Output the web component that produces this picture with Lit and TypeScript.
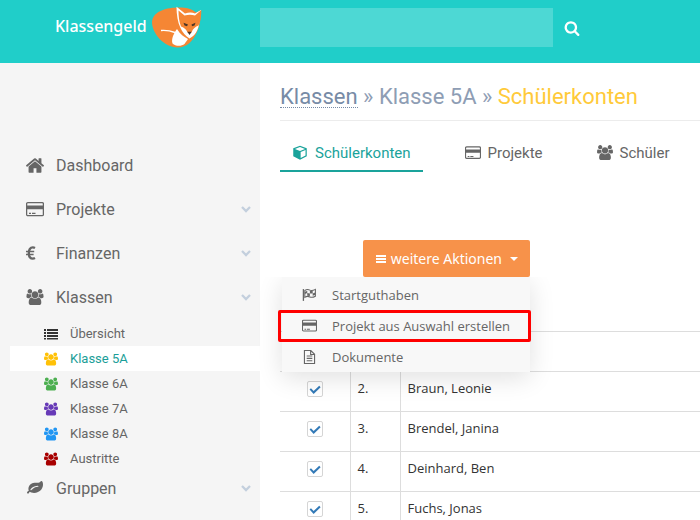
import { LitElement, html, svg, css, nothing } from "lit";
import type { TemplateResult } from "lit";
import { customElement, property, state } from "lit/decorators.js";
import { classMap } from "lit/directives/class-map.js";

interface Icon {
  box: string;
  shape: TemplateResult;
}

const icons: Record<string, Icon> = {
  home: {
    box: "90 150 1612 1400",
    shape: svg`<path d="M1472 992v480q0 26-19 45t-45 19h-384v-384H768v384H384q-26 0-45-19t-19-45V992q0-1 .5-3t.5-3l575-474 575 474q1 2 1 6zm223-69l-62 74q-8 9-21 11h-3q-13 0-21-7L896 424l-692 577q-12 8-24 7-13-2-21-11l-62-74q-8-10-7-23.5t11-21.5l719-599q32-26 76-26t76 26l244 204V288q0-14 9-23t23-9h192q14 0 23 9t9 23v408l219 182q10 8 11 21.5t-7 23.5z"/>`,
  },
  card: {
    box: "0 0 18 16",
    shape: svg`<rect x=".6" y="1.600" width="16.800" height="13" rx="1.200" fill="none" stroke="currentColor" stroke-width="1.300"/><path d="M1 4.500h16v3.700H1zM3 11.800h2v1.200H3zM6 11.800h3.500v1.200H6z"/>`,
  },
  users: {
    box: "0 0 1920 1792",
    shape: svg`<path d="M593 896q-162 5-265 128H194q-82 0-138-40.5T0 865q0-353 124-353 6 0 43.5 21t97.5 42.5T384 597q67 0 133-23-5 37-5 66 0 139 81 256zm1071 637q0 120-73 189.5t-194 69.5H523q-121 0-194-69.5T256 1533q0-53 3.5-103.5t14-109T300 1212t43-97.5 62-81 85.5-53.5T602 960q10 0 43 21.5t73 48 107 48 135 21.5 135-21.5 107-48 73-48 43-21.5q61 0 111.5 20t85.5 53.5 62 81 43 97.5 26.5 108.5 14 109 3.5 103.5zM640 256q0 106-75 181t-181 75-181-75-75-181 75-181T384 0t181 75 75 181zm704 384q0 159-112.5 271.5T960 1024 688.5 911.5 576 640t112.5-271.5T960 256t271.5 112.5T1344 640zm576 225q0 78-56 118.5t-138 40.5h-134q-103-123-265-128 81-117 81-256 0-29-5-66 66 23 133 23 59 0 119-21.5t97.5-42.5 43.5-21q124 0 124 353zm-128-609q0 106-75 181t-181 75-181-75-75-181 75-181 181-75 181 75 75 181z"/>`,
  },
  euro: {
    box: "0 0 18 16",
    shape: svg`<g fill="none" stroke="currentColor" stroke-width="2.300"><path d="M9 3Q8 2.400 6.800 2.400C4.200 2.400 2.800 4.800 2.800 8s1.400 5.600 4 5.600Q8 13.600 9 13"/><path d="M0 6.500h8.200M0 9.500h7.600" stroke-width="1.600"/></g>`,
  },
  leaf: {
    box: "0 0 1792 1792",
    shape: svg`<path d="M1280 704q0-26-19-45t-45-19q-172 0-318 49.5t-259.500 134-235.500 219.500q-19 21-19 45 0 26 19 45t45 19q24 0 45-19 27-24 74-71t67-66q137-124 268.500-176t313.500-52q26 0 45-19t19-45zm512-198q0 95-20 193-46 224-184.500 383T1230 1340q-214 108-438 108-148 0-286-47-15-5-88-42t-96-37q-16 0-39.500 32T237 1424t-52.500 70-60.500 32q-43 0-63.500-17.500T15 1449q-2-4-6-11t-5.500-10-3-9.500T0 1405q0-35 31-73.500t68-65.500 68-56 31-48q0-4-14-38t-16-44q-9-51-9-104 0-115 43.500-220t119-184.500 170.500-139 204-95.500q55-18 145-25.500t179.500-9 178.500-6 163.500-24T1475 210l29.500-29.500 29.500-28 27-20 36.500-16T1641 112q39 0 70.500 46t47.500 112 24 124 8 96z"/>`,
  },
  list: {
    box: "0 0 14 14",
    shape: svg`<path d="M0 2h2v2H0zM3 2h11v2H3zM0 5h2v2H0zM3 5h11v2H3zM0 8h2v2H0zM3 8h11v2H3zM0 11h2v1.500H0zM3 11h11v1.500H3z"/>`,
  },
  cube: {
    box: "0 0 16 16",
    shape: svg`<path fill-rule="evenodd" d="M8 .8 15.200 3.500v8.600L8 15.700.8 12.100V3.500zM8 2.100 2.600 4.200 8 6.300l5.400-2.100zM8.700 13.900l5.200-2.600V5.400L8.700 7.400z"/>`,
  },
  bars: {
    box: "0 0 12 12",
    shape: svg`<path d="M1 2h10v2H1zM1 5h10v2H1zM1 8h10v2H1z"/>`,
  },
  flag: {
    box: "0 0 16 16",
    shape: svg`<path d="M.8 2.200h1.400v12.600H.8z"/><path fill="none" stroke="currentColor" stroke-width="1.100" d="M3 3.700c2.200-1.500 3.800-1.200 5.400-.4s3.300.5 5.900-.8v7.300c-2.500 1.400-4.300 1.600-5.900.8S5 9.700 3 11z"/><path d="M3 5.200 5.600 4v2.500L3 7.500zM5.600 6.500l2.800.4v2.700l-2.800-.4zM8.400 4l3 .1v2.700l-3 .1zM11.400 6.800l2.600-1v2.600l-2.600 1z"/>`,
  },
  file: {
    box: "0 0 16 16",
    shape: svg`<path fill="none" stroke="currentColor" stroke-width="1.200" d="M2.600 1.600h6.800l4 4v9.800H2.600zM9.200 1.600v4.200h4.200M5 7.500h6M5 10h6M5 12.500h6"/>`,
  },
  search: {
    box: "0 0 1792 1792",
    shape: svg`<path d="M1216 832q0-185-131.500-316.500T768 384 451.500 515.500 320 832t131.500 316.500T768 1280t316.500-131.500T1216 832zm512 832q0 52-38 90t-90 38q-54 0-90-38l-343-342q-179 124-399 124-143 0-273.500-55.500t-225-150-150-225T64 832t55.500-273.500 150-225 225-150T768 128t273.500 55.500 225 150 150 225T1472 832q0 220-124 399l343 343q37 37 37 90z"/>`,
  },
  chevron: {
    box: "0 0 10 10",
    shape: svg`<path fill="none" stroke="currentColor" stroke-width="2.300" d="M1 3l4 4 4-4"/>`,
  },
};

@customElement("app-icon")
export class AppIcon extends LitElement {
  @property() name = "";

  static styles = css`
    :host {
      display: block;
      flex: none;
      width: 18px;
      height: 16px;
    }
    svg {
      display: block;
      width: 100%;
      height: 100%;
      fill: currentColor;
    }
  `;

  render() {
    const icon = icons[this.name];
    return icon
      ? html`<svg viewBox=${icon.box} aria-hidden="true">${icon.shape}</svg>`
      : nothing;
  }
}

const menu = [
  { label: "Dashboard", icon: "home" },
  { label: "Projekte", icon: "card", expands: true },
  { label: "Finanzen", icon: "euro", expands: true },
  {
    label: "Klassen",
    icon: "users",
    expands: true,
    children: [
      { label: "Übersicht", icon: "list", tone: "dark" },
      { label: "Klasse 5A", icon: "users", tone: "yellow", active: true },
      { label: "Klasse 6A", icon: "users", tone: "green" },
      { label: "Klasse 7A", icon: "users", tone: "purple" },
      { label: "Klasse 8A", icon: "users", tone: "blue" },
      { label: "Austritte", icon: "users", tone: "red" },
    ],
  },
  { label: "Gruppen", icon: "leaf", expands: true },
];

@customElement("side-menu")
export class SideMenu extends LitElement {
  static styles = css`
    :host {
      display: block;
      background: #f5f5f5;
      color: #666;
      padding-top: 85px;
      font-size: 16px;
    }
    ul {
      list-style: none;
      margin: 0;
      padding: 0;
    }
    a {
      display: flex;
      align-items: center;
      color: inherit;
      text-decoration: none;
    }
    .item {
      margin-bottom: 10px;
    }
    .item.open {
      margin-bottom: 0;
    }
    .entry {
      height: 34px;
      padding: 0 9px 0 26px;
      gap: 12px;
    }
    .label {
      flex: 1;
    }
    .arrow {
      width: 10px;
      height: 10px;
      color: #c3cfdd;
    }
    .sub {
      padding: 7px 0 0 10px;
      font-size: 13px;
    }
    .child {
      height: 25px;
      padding-left: 34px;
      gap: 12px;
    }
    .child app-icon {
      width: 14px;
      height: 14px;
    }
    .active {
      background: #fff;
      color: #1b9e98;
    }
    .dark { color: #333; }
    .yellow { color: #ffc107; }
    .green { color: #4caf50; }
    .purple { color: #673ab7; }
    .blue { color: #2196f3; }
    .red { color: #a80000; }
  `;

  render() {
    return html`<nav>
      <ul>
        ${menu.map(
          (m) => html`<li class=${classMap({ item: true, open: !!m.children })}>
            <a class="entry" href="#">
              <app-icon name=${m.icon}></app-icon>
              <span class="label">${m.label}</span>
              ${m.expands
                ? html`<app-icon class="arrow" name="chevron"></app-icon>`
                : nothing}
            </a>
            ${m.children
              ? html`<ul class="sub">
                  ${m.children.map(
                    (c) => html`<li>
                      <a class=${classMap({ child: true, active: !!c.active })} href="#">
                        <app-icon class=${c.tone} name=${c.icon}></app-icon>
                        <span>${c.label}</span>
                      </a>
                    </li>`
                  )}
                </ul>`
              : nothing}
          </li>`
        )}
      </ul>
    </nav>`;
  }
}

@customElement("action-menu")
export class ActionMenu extends LitElement {
  @state() private open = true;

  private actions = [
    { label: "Startguthaben", icon: "flag" },
    { label: "Projekt aus Auswahl erstellen", icon: "card", marked: true },
    { label: "Dokumente", icon: "file" },
  ];

  static styles = css`
    :host {
      display: block;
      position: relative;
      width: 250px;
      font-family: "Open Sans", "Noto Sans", sans-serif;
    }
    button {
      font: inherit;
      border: 0;
      cursor: pointer;
    }
    .toggle {
      display: flex;
      align-items: center;
      gap: 4px;
      height: 37px;
      margin-left: auto;
      padding: 0 12px;
      border-radius: 2px;
      background: #f7924a;
      color: #fff;
      font-family: "Noto Sans", sans-serif;
      font-size: 14px;
      white-space: nowrap;
    }
    .toggle app-icon {
      width: 12px;
      height: 12px;
    }
    .caret {
      margin-left: 4px;
      border: 4px solid transparent;
      border-top-color: #fff;
      border-bottom: 0;
    }
    .list {
      position: absolute;
      z-index: 2;
      top: 100%;
      right: 0;
      width: 248px;
      box-sizing: border-box;
      margin: 0;
      padding: 2px 0 0;
      list-style: none;
      background: #f8f8f8;
      box-shadow: 0 6px 24px rgba(0, 0, 0, 0.12);
      clip-path: inset(0 -40px -40px -40px);
    }
    .action {
      position: relative;
      display: flex;
      align-items: center;
      gap: 15px;
      width: 100%;
      height: 31px;
      padding: 0 20px;
      background: none;
      color: #666;
      font-size: 13px;
      white-space: nowrap;
    }
    .action app-icon {
      width: 15px;
      height: 15px;
    }
    .marked::after {
      content: "";
      position: absolute;
      inset: 0 -1px -1px -4px;
      border: 3px solid #f00;
      border-radius: 2px;
    }
  `;

  render() {
    return html`
      <button
        class="toggle"
        aria-expanded=${this.open}
        @click=${() => (this.open = !this.open)}
      >
        <app-icon name="bars"></app-icon>weitere Aktionen<span class="caret"></span>
      </button>
      ${this.open
        ? html`<ul class="list">
            ${this.actions.map(
              (a) => html`<li>
                <button class=${classMap({ action: true, marked: !!a.marked })}>
                  <app-icon name=${a.icon}></app-icon>${a.label}
                </button>
              </li>`
            )}
          </ul>`
        : nothing}
    `;
  }
}

@customElement("app-root")
export class AppRoot extends LitElement {
  private tabs = [
    { label: "Schülerkonten", icon: "cube", active: true },
    { label: "Projekte", icon: "card" },
    { label: "Schüler", icon: "users" },
  ];

  private pupils = [
    { nr: 2, name: "Braun, Leonie" },
    { nr: 3, name: "Brendel, Janina" },
    { nr: 4, name: "Deinhard, Ben" },
    { nr: 5, name: "Fuchs, Jonas" },
  ];

  static styles = css`
    :host {
      display: flex;
      flex-direction: column;
      height: 100vh;
      overflow: hidden;
      background: #fff;
      font-family: Roboto, "Liberation Sans", sans-serif;
    }
    header {
      display: grid;
      grid-template-columns: 260px 1fr;
      flex: none;
      height: 63px;
      background: #20cec9;
      color: #fff;
    }
    .logo {
      display: flex;
      gap: 4px;
      padding: 6px 0 0 55px;
      color: #fff;
      text-decoration: none;
      font-family: "Noto Sans", sans-serif;
      font-size: 16px;
      font-weight: 500;
      line-height: 41px;
    }
    .fox {
      width: 52px;
      height: 44px;
    }
    .search {
      display: flex;
      align-items: flex-start;
      padding: 8px 119px 0 0;
      gap: 10px;
    }
    .search input {
      flex: 1;
      min-width: 0;
      height: 39px;
      box-sizing: border-box;
      padding: 0 12px;
      border: 0;
      background: #4dd8d4;
      color: #fff;
      font: inherit;
    }
    .search button {
      height: 39px;
      padding: 0;
      border: 0;
      background: none;
      color: #fff;
    }
    .search app-icon {
      height: 16px;
    }
    .body {
      display: grid;
      grid-template-columns: 260px 1fr;
      flex: 1;
      min-height: 0;
    }
    main {
      min-width: 0;
      padding-left: 20px;
    }
    h1 {
      margin: 0;
      padding: 20px 0 10px;
      border-bottom: 1px solid #ececec;
      font-size: 22px;
      font-weight: 400;
      line-height: 27px;
      color: #8e9db4;
      white-space: nowrap;
    }
    h1 a {
      display: inline-block;
      line-height: 20px;
      color: #778ba6;
      text-decoration: none;
      border-bottom: 1px dotted #778ba6;
    }
    h1 strong {
      font-weight: 400;
      color: #ffca3a;
    }
    .tabs {
      display: flex;
      gap: 30px;
      padding-top: 14px;
    }
    .tab {
      display: flex;
      align-items: center;
      gap: 7px;
      height: 35px;
      padding: 0 12px;
      border-bottom: 2px solid transparent;
      color: #666;
      font-size: 15px;
      text-decoration: none;
      white-space: nowrap;
    }
    .tab app-icon {
      width: 16px;
      height: 15px;
    }
    .current {
      color: #1aa39b;
      border-color: #1aa39b;
    }
    .actions {
      padding-top: 68px;
    }
    table {
      width: 100%;
      margin-top: 54px;
      border-collapse: collapse;
      table-layout: fixed;
      font-family: "Open Sans", "Noto Sans", sans-serif;
      font-size: 13px;
      color: #333;
    }
    th,
    td {
      box-sizing: border-box;
      height: 40px;
      padding: 7px 7px 0;
      border-top: 1px solid #ddd;
      text-align: left;
      vertical-align: top;
      font-weight: 400;
      line-height: 18px;
    }
    td + td {
      border-left: 1px solid #ddd;
    }
    .pick {
      width: 70px;
      text-align: center;
    }
    .nr {
      width: 50px;
    }
    input[type="checkbox"] {
      appearance: none;
      display: block;
      width: 16px;
      height: 16px;
      margin: 2px auto 0;
      border: 1px solid #d5d5d5;
      border-radius: 2px;
      background: #fff;
    }
    input[type="checkbox"]:checked::before {
      content: "";
      display: block;
      width: 14px;
      height: 14px;
      background: #337ab7;
      clip-path: polygon(13% 54%, 23% 44%, 42% 64%, 82% 27%, 92% 37%, 42% 86%);
    }
  `;

  render() {
    return html`
      <header>
        <a class="logo" href="#">
          <span>Klassengeld</span>
          <svg class="fox" viewBox="0 0 52 44" aria-hidden="true">
            <path fill="#f58634" d="M1 16C2 6 13 2 26 1.500c7-.3 14 .5 19 5l5-2.500c-.5 9-1 16-4.500 23-4 8-9 14.500-19 14.500C13 41.500 1 27 1 16z"/>
            <path fill="#fff" d="M26 23c-3 4-6 10-4.500 14.500 3 3 9 3 12 .5 1-2 2.500-3 3.500-5-4-2-8-5-11-10z"/>
            <path fill="none" stroke="#fff" stroke-width="1.400" d="M10 24.500c6-.5 10 .5 14 2"/>
            <path fill="#fff" d="M25.500.8 34 7.500c4-1.200 7-1.200 10 0L50 4l-2 14c-1 7-4 11.500-9.500 14.500C31 28 25.500 18 25.500.8z"/>
            <path fill="#f58634" d="M27.500 4.500 33.500 9.500c4-1 7-1 10.500 0L50.300 4c0 6-.8 12-2.800 15.500-3 1-5.500 3-7 7h-4c-1.500-3.500-3-4.500-6.500-6-1.800-5-2.500-10-2.500-16z"/>
            <path fill="#4b3527" d="M32.500 16.800l4.500 1.700-1 1.800-2.500-.8zM44.500 16.800l-4 1.700.5 1.800 2.500-.8zM36.300 25.800h4.400L38.500 29z"/>
          </svg>
        </a>
        <form class="search">
          <input type="search" aria-label="Suche" />
          <button type="button" aria-label="Suchen">
            <app-icon name="search"></app-icon>
          </button>
        </form>
      </header>
      <div class="body">
        <side-menu></side-menu>
        <main>
          <h1><a href="#">Klassen</a> » Klasse 5A » <strong>Schülerkonten</strong></h1>
          <nav class="tabs">
            ${this.tabs.map(
              (t) => html`<a class=${classMap({ tab: true, current: !!t.active })} href="#">
                <app-icon name=${t.icon}></app-icon>${t.label}
              </a>`
            )}
          </nav>
          <div class="actions"><action-menu></action-menu></div>
          <table>
            <thead>
              <tr>
                <th class="pick"></th>
                <th class="nr"></th>
                <th></th>
              </tr>
            </thead>
            <tbody>
              ${this.pupils.map(
                (p) => html`<tr>
                  <td class="pick">
                    <input type="checkbox" aria-label=${p.name} checked />
                  </td>
                  <td>${p.nr}.</td>
                  <td>${p.name}</td>
                </tr>`
              )}
            </tbody>
          </table>
        </main>
      </div>
    `;
  }
}
